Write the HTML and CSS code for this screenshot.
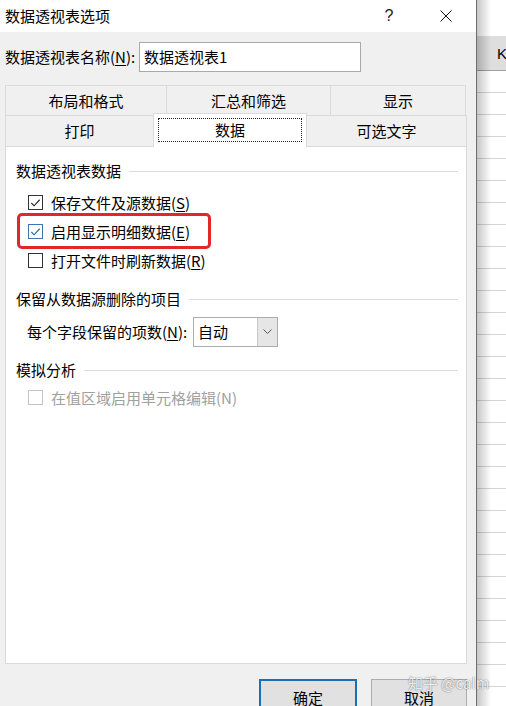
FILE: index.html
```html
<!DOCTYPE html>
<html lang="zh-CN">
  <head>
    <meta charset="UTF-8">
    <title>数据透视表选项</title>
    <link rel="stylesheet" href="styles.css">
  </head>
  <body>
    <div class="screen">
      <div class="dialog">
        <div class="titlebar">
          <span class="title">数据透视表选项</span>
          <span class="help">?</span>
          <span class="close">
            <svg width="12" height="12" viewBox="0 0 12 12"><path d="M0.5 0.5 L11.5 11.5 M11.5 0.5 L0.5 11.5" stroke="#111" stroke-width="1" fill="none"/></svg>
          </span>
        </div>

        <div class="body">
          <div class="name-row">
            <label>数据透视表名称(<u>N</u>):</label>
            <div class="textbox">数据透视表1</div>
          </div>

          <div class="tabs">
            <div class="tab-row">
              <div class="tab w1">布局和格式</div>
              <div class="tab w2">汇总和筛选</div>
              <div class="tab w3">显示</div>
            </div>
            <div class="tab-row">
              <div class="tab w4">打印</div>
              <div class="tab w5 active"><span class="focus">数据</span></div>
              <div class="tab w6">可选文字</div>
            </div>
          </div>

          <div class="panel">
            <div class="group first">数据透视表数据</div>
            <div class="check">
              <span class="box"><svg width="14" height="14" viewBox="0 0 14 14"><path d="M2.5 7 L5.5 10 L11.5 3.5" stroke="#222" stroke-width="1.2" fill="none"/></svg></span>
              保存文件及源数据(<u>S</u>)
            </div>
            <div class="check">
              <span class="box hot"><svg width="14" height="14" viewBox="0 0 14 14"><path d="M2.5 7 L5.5 10 L11.5 3.5" stroke="#1f63ad" stroke-width="1.2" fill="none"/></svg></span>
              启用显示明细数据(<u>E</u>)
              <span class="mark"></span>
            </div>
            <div class="check">
              <span class="box"></span>
              打开文件时刷新数据(<u>R</u>)
            </div>

            <div class="group second">保留从数据源删除的项目</div>
            <div class="combo-row">
              <label>每个字段保留的项数(<u>N</u>):</label>
              <div class="combo">
                <span class="value">自动</span>
                <span class="arrow"><svg width="9" height="6" viewBox="0 0 9 6"><path d="M0.5 0.5 L4.5 4.5 L8.5 0.5" stroke="#555" stroke-width="1" fill="none"/></svg></span>
              </div>
            </div>

            <div class="group third">模拟分析</div>
            <div class="check disabled">
              <span class="box"></span>
              在值区域启用单元格编辑(N)
            </div>
          </div>

          <div class="buttons">
            <div class="btn default">确定</div>
            <div class="btn">取消</div>
          </div>
        </div>
      </div>

      <div class="sheet">
        <div class="sheet-top"></div>
        <div class="col-head">K</div>
        <div class="rows"></div>
      </div>

      <div class="watermark">知乎 @calm</div>
    </div>
  </body>
</html>
```

FILE: styles.css
```css
html, body { margin: 0; padding: 0; }
body { font-family: "Noto Sans CJK SC", "Microsoft YaHei", sans-serif; font-size: 15px;
  color: #000; background: #fff; overflow: hidden }

.screen { position: relative; display: flex; width: 506px; height: 706px; overflow: hidden }

/* dialog */
.dialog { width: 478px; border-right: 1px solid #6f6f6f; background: #f0f0f0;
  display: flex; flex-direction: column }
.titlebar { height: 32px; background: #fff; display: flex; align-items: center;
  padding: 0 2px 0 5px; line-height: 32px }
.title { flex: 1 }
.help { width: 40px; text-align: center; font-family: "Liberation Sans", sans-serif;
  font-size: 16px; color: #222 }
.close { width: 56px; margin-left: 9px; display: flex; justify-content: center; align-items: center }

.body { flex: 1; padding: 0 9px 0 5px; display: flex; flex-direction: column }

.name-row { display: flex; align-items: center; height: 30px; margin-top: 10px }
.name-row label { width: 134px; line-height: 30px }
.textbox { width: 216px; height: 28px; border: 1px solid #a9a9a9; background: #fff;
  line-height: 28px; padding-left: 4px; box-sizing: content-box }

/* tabs */
.tabs { margin-top: 13px; width: 462px }
.tab-row { display: flex; height: 30px }
.tab-row + .tab-row { height: 31px }
.tab { box-sizing: border-box; border: 1px solid #dadada; border-bottom: none;
  margin-left: -1px; text-align: center; line-height: 30px; background: #f0f0f0 }
.tab:first-child { margin-left: 0 }
.w1 { width: 162px } .w2 { width: 165px } .w3 { width: 136px }
.w4 { width: 149px } .w5 { width: 154px } .w6 { width: 161px }
.tab.active { position: relative; z-index: 2; background: #fff; margin-top: -2px;
  height: 34px; padding: 4px 4px 0; border-color: #dadada; line-height: 24px }
.focus { display: block; border: 1px dotted #222; height: 24px; box-sizing: border-box; line-height: 22px }

/* panel */
.panel { position: relative; z-index: 1; width: 462px; height: 518px; box-sizing: border-box;
  border: 1px solid #d9d9d9; background: #fff; padding: 11px 8px 0 10px }
.group { display: flex; align-items: center; height: 26px; line-height: 26px }
.group::after { content: ""; flex: 1; height: 1px; background: #dcdcdc; margin-left: 8px }
.group.second { margin-top: 11px }
.group.third { margin-top: 10px }

.check { position: relative; display: flex; align-items: center; height: 29px;
  line-height: 29px; padding-left: 12px }
.group.first + .check { margin-top: 4px }
.box { width: 13px; height: 13px; border: 1px solid #333; background: #fff;
  margin-right: 8px; display: flex; align-items: center; justify-content: center }
.box svg { display: block }
.box.hot { border-color: #3f74b0 }
.check.disabled { color: #a0a0a0 }
.check.disabled .box { border-color: #c4c4c4 }
u { text-underline-offset: 2px }

/* red annotation */
.mark { position: absolute; left: 1px; top: -4px; width: 188px; height: 30px;
  border: 3px solid #e2262a; border-radius: 5px }

.combo-row { display: flex; align-items: center; height: 30px; margin-top: 5px; padding-left: 11px }
.combo-row label { width: 166px; line-height: 30px }
.combo { display: flex; width: 83px; height: 28px; border: 1px solid #adadad; background: #fff }
.combo .value { flex: 1; padding-left: 4px; line-height: 28px }
.combo .arrow { width: 19px; border-left: 1px solid #c9c9c9; background: #e6e6e6;
  display: flex; align-items: center; justify-content: center }

/* buttons */
.buttons { display: flex; justify-content: flex-end; gap: 14px; margin-top: 15px }
.btn { width: 96px; height: 34px; box-sizing: border-box; border: 1px solid #adadad;
  background: #e1e1e1; text-align: center; line-height: 36px }
.btn.default { width: 98px; border: 2px solid #1a6fb7; line-height: 34px }

/* spreadsheet behind */
.sheet { flex: 1; background: #fff; position: relative }
.sheet::before { content: ""; position: absolute; left: 0; top: 0; bottom: 0; width: 14px;
  background: linear-gradient(to right, rgba(0,0,0,0.22), rgba(0,0,0,0)); z-index: 2 }
.sheet-top { height: 36px; background: #fff }
.col-head { height: 34px; background: #dedede; border-bottom: 1px solid #9e9e9e;
  padding-left: 20px; line-height: 36px; font-family: "Liberation Sans", sans-serif; font-size: 15px;
  overflow: hidden; white-space: nowrap }
.rows { height: 640px;
  background: repeating-linear-gradient(to bottom, #fff 0, #fff 21px, #d4d4d4 21px, #d4d4d4 22px) }

.watermark { position: absolute; left: 408px; top: 672px; font-size: 15px; line-height: 22px;
  color: rgba(255,255,255,0.9); white-space: nowrap;
  text-shadow: 0 0 1px rgba(0,0,0,0.45), 0 0 2px rgba(0,0,0,0.25);
  font-family: "Noto Sans CJK SC", "Liberation Sans", sans-serif; z-index: 5 }
```
